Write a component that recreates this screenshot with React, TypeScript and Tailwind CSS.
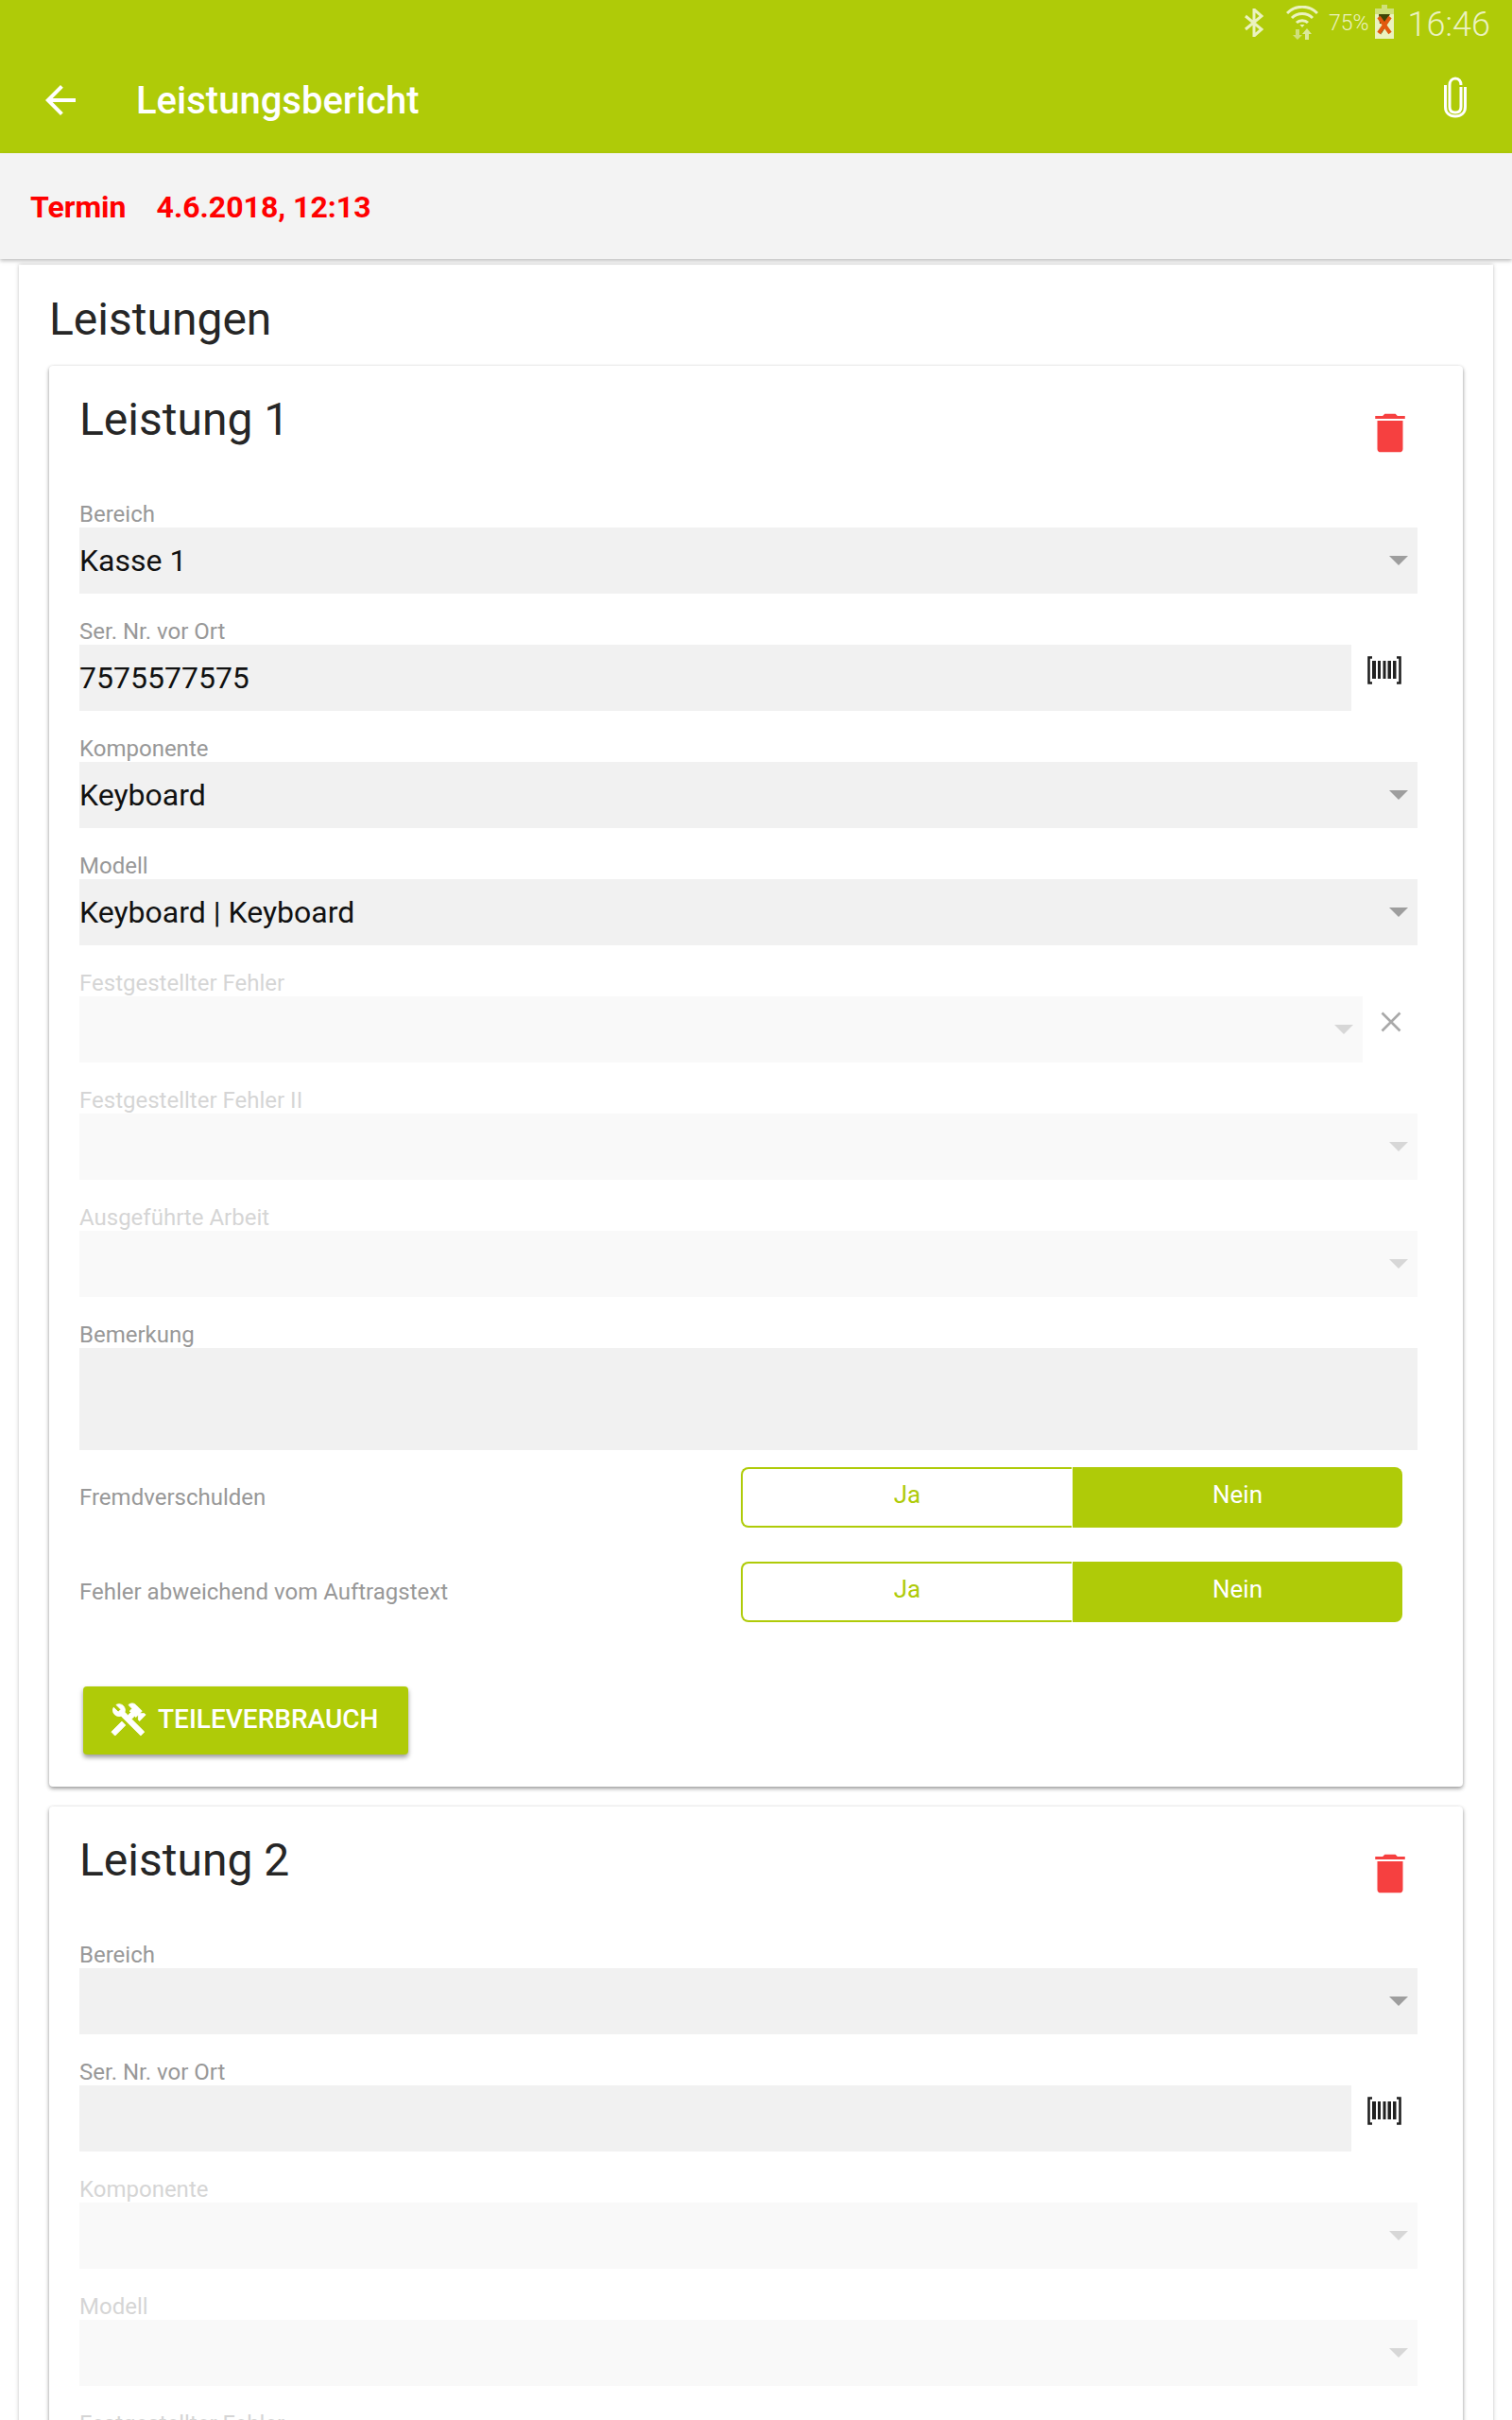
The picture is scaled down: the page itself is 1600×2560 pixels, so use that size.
const Arrow = () => (
  <svg width="20" height="10" viewBox="0 0 20 10" className="shrink-0">
    <polygon points="0,0 20,0 10,10" fill="#9e9e9e" />
  </svg>
);

const BackArrow = () => (
  <svg width="48" height="48" viewBox="0 0 24 24" className="mt-[-2px] shrink-0">
    <path d="M20 11H7.830l5.590-5.590L12 4l-8 8 8 8 1.410-1.410L7.830 13H20v-2z" fill="#ffffff" />
  </svg>
);

// mirrored, the wrench sits on the left in the picture
const HammerWrench = () => (
  <svg width="44" height="44" viewBox="0 0 24 24" className="shrink-0 -scale-x-100">
    <path
      d="M13.780 15.300L19.780 21.300L21.890 19.140L15.890 13.140L13.780 15.300M17.500 10.100C17.110 10.100 16.690 10.050 16.360 9.910L4.970 21.250L2.860 19.140L10.270 11.740L8.500 9.960L7.780 10.660L6.330 9.250V12.110L5.630 12.810L2.110 9.250L2.810 8.550H5.620L4.220 7.140L7.780 3.580C8.950 2.410 10.830 2.410 12 3.580L9.890 5.740L11.300 7.140L10.590 7.850L12.380 9.630L14.200 7.750C14.060 7.420 14 7 14 6.630C14 4.660 15.560 3.110 17.500 3.110C18.090 3.110 18.610 3.250 19.080 3.530L16.410 6.200L17.910 7.700L20.580 5.030C20.860 5.500 21 6 21 6.630C21 8.550 19.450 10.100 17.500 10.100Z"
      fill="#ffffff"
      stroke="#ffffff"
      strokeWidth="0.5"
    />
  </svg>
);

const Barcode = () => (
  <svg width="36" height="30" viewBox="0 0 36 30" className="shrink-0">
    <path d="M5 1.500H1.500V28.500H5M31 1.500H34.500V28.500H31" fill="none" stroke="#212121" strokeWidth="2.600" />
    <rect x="5" y="5" width="4" height="19" fill="#212121" />
    <rect x="11" y="5" width="3" height="19" fill="#212121" />
    <rect x="16.500" y="5" width="3" height="19" fill="#212121" />
    <rect x="21.500" y="5" width="3.500" height="19" fill="#212121" />
    <rect x="27" y="5" width="3.500" height="19" fill="#212121" />
  </svg>
);

const Trash = () => (
  <svg width="54" height="54" viewBox="0 0 24 24" className="shrink-0">
    <path
      d="M19 4h-3.500l-1-1h-5l-1 1H5v1.300h14V4zM6 19.500c0 .9.7 1.500 1.500 1.500h9c.8 0 1.500-.6 1.500-1.500V6.200H6v13.300z"
      fill="#f64040"
    />
  </svg>
);

const Field = ({
  label,
  value,
  disabled,
  children,
  trailing,
  h = "h-[70px]",
}: {
  label: string;
  value?: string;
  disabled?: boolean;
  children?: React.ReactNode;
  trailing?: React.ReactNode;
  h?: string;
}) => (
  <div className="pt-[28px]">
    <div className={`h-[26px] text-[24px] leading-[25px] text-[#989898] ${disabled ? "opacity-40" : ""}`}>{label}</div>
    <div className="flex items-start">
      <div className={`flex flex-1 items-center justify-between bg-[#f1f1f1] pr-[10px] ${h} ${disabled ? "opacity-40" : ""}`}>
        <span className="text-[32px] text-[#111111]">{value}</span>
        {children}
      </div>
      {trailing}
    </div>
  </div>
);

const Toggle = ({ label }: { label: string }) => (
  <div className="flex items-center justify-between pr-[16px]">
    <span className="text-[24px] text-[#989898]">{label}</span>
    <div className="flex h-[64px] w-[700px] text-[26px]">
      <div className="flex w-[350px] items-start justify-center rounded-l-[8px] border-2 border-r-0 border-[#afcb08] pt-[12px] leading-[30px] text-[#afcb08]">
        Ja
      </div>
      <div className="ml-[1px] flex flex-1 items-start justify-center rounded-r-[8px] bg-[#afcb08] pt-[14px] leading-[30px] text-white">
        Nein
      </div>
    </div>
  </div>
);

const Card = ({ n, children }: { n: number; children: React.ReactNode }) => (
  <div className="rounded-[4px] bg-white pr-[48px] pl-[32px] shadow-[0_2px_4px_rgba(0,0,0,0.4),0_0_3px_rgba(0,0,0,0.06)]">
    <div className="flex h-[117px] items-start justify-between">
      <h2 className="pt-[27px] text-[48px] leading-[60px] font-normal text-[#262626]">Leistung {n}</h2>
      <div className="mt-[44px] mr-[2px]">
        <Trash />
      </div>
    </div>
    {children}
  </div>
);

const Status = () => (
  <div className="flex h-[83px] items-start justify-end pr-[23px] text-[#ebf2c0]">
    <svg width="20" height="30" viewBox="0 0 20 30" className="mt-[9px]">
      <path d="M1 8L18 22L10 29V1L18 8L1 22" fill="none" stroke="#ebf2c0" strokeWidth="3" />
    </svg>
    <svg width="34" height="36" viewBox="0 0 34 36" className="mt-[6px] ml-[24px]">
      <path d="M1 8C10 -1 24 -1 33 8" fill="none" stroke="#ebf2c0" strokeWidth="3" />
      <path d="M6 13C12 7 22 7 28 13" fill="none" stroke="#ebf2c0" strokeWidth="3" />
      <path d="M11 18C14 15 20 15 23 18" fill="none" stroke="#ebf2c0" strokeWidth="3" />
      <path d="M14.500 20H19.500L17 23Z" fill="#ebf2c0" />
      <path d="M14 25V31H17L12 36L7 31H10V25Z" fill="#cfe07a" />
      <path d="M20 36V30H17L22 24L27 30H24V36Z" fill="#dbe89a" />
    </svg>
    <span className="mt-[11px] ml-[11px] text-[23px] leading-[28px] font-light">75%</span>
    <svg width="20" height="36" viewBox="0 0 20 36" className="mt-[5px] ml-[6px]">
      <rect x="7" y="0" width="6" height="4" fill="#cfe07a" />
      <rect x="0" y="4" width="20" height="32" fill="#ebf2c0" />
      <rect x="0" y="4" width="20" height="6" fill="#cfe07a" />
      <path d="M4 10H16L12 17H15L6 32L9 20H5Z" fill="#3f4707" />
      <path d="M4 13L16 30M16 13L4 30" stroke="#e2590f" strokeWidth="4" />
    </svg>
    <span className="mt-[4px] ml-[15px] text-[36px] leading-[44px] font-light">16:46</span>
  </div>
);

const ClearX = () => (
  <div className="w-[58px] shrink-0 pt-[16px] pl-[19px]">
    <svg width="22" height="22" viewBox="0 0 22 22">
      <path d="M1.500 1.500L20.500 20.500M20.500 1.500L1.500 20.500" stroke="#a9a9a9" strokeWidth="2.600" />
    </svg>
  </div>
);

const BarcodeSlot = () => (
  <div className="mt-[12px] ml-[17px] mr-[17px] shrink-0">
    <Barcode />
  </div>
);

export default function App() {
  return (
    <div className="h-[2560px] overflow-hidden bg-white font-['Roboto',sans-serif]">
      <header className="h-[162px] bg-[#afcb08]">
        <Status />
        <div className="flex items-center justify-between pr-[48px] pl-[40px]">
          <div className="flex items-center">
            <BackArrow />
            <span className="ml-[56px] text-[40px] leading-[48px] font-medium text-white">Leistungsbericht</span>
          </div>
          <svg width="24" height="44" viewBox="0 0 24 44" className="mt-[-8px]">
            <path
              d="M18 11V32C18 36 15.500 38 12 38C8.500 38 6 36 6 32V9C6 5 8.500 2 12 2C16 2 18 5 18 9M22.500 11V32C22.500 38.500 18 42 12 42C6 42 1.500 38.500 1.500 32V9"
              fill="none"
              stroke="#ffffff"
              strokeWidth="3"
            />
          </svg>
        </div>
      </header>

      <div className="relative z-10 flex h-[112px] items-center gap-[32px] bg-[#f3f3f3] pt-[2px] pl-[32px] text-[32px] font-bold text-[#ff0000] shadow-[0_2px_4px_rgba(0,0,0,0.25)]">
        <span>Termin</span>
        <span>4.6.2018, 12:13</span>
      </div>

      <div className="mx-[20px] mt-[6px] bg-white px-[32px] shadow-[0_0_4px_rgba(0,0,0,0.25)]">
        <h1 className="pt-[30px] pb-[21px] text-[48px] leading-[56px] font-normal text-[#262626]">Leistungen</h1>

        <div className="flex flex-col gap-[21px]">
          <Card n={1}>
            <div>
              <Field label="Bereich" value="Kasse 1">
                <Arrow />
              </Field>
              <Field label="Ser. Nr. vor Ort" value="7575577575" trailing={<BarcodeSlot />}></Field>
              <Field label="Komponente" value="Keyboard">
                <Arrow />
              </Field>
              <Field label="Modell" value="Keyboard | Keyboard">
                <Arrow />
              </Field>
              <Field label="Festgestellter Fehler" disabled trailing={<ClearX />}>
                <Arrow />
              </Field>
              <Field label="Festgestellter Fehler II" disabled>
                <Arrow />
              </Field>
              <Field label="Ausgeführte Arbeit" disabled>
                <Arrow />
              </Field>
              <Field label="Bemerkung" h="h-[108px]"></Field>
            </div>
            <div className="mt-[18px] flex flex-col gap-[36px]">
              <Toggle label="Fremdverschulden" />
              <Toggle label="Fehler abweichend vom Auftragstext" />
            </div>
            <div className="pt-[68px] pb-[34px] pl-[4px]">
              <button className="flex h-[72px] w-[344px] items-center rounded-[4px] bg-[#afcb08] pb-[2px] pl-[26px] text-[28px] font-medium text-white shadow-[0_3px_5px_rgba(0,0,0,0.4)]">
                <HammerWrench />
                <span className="ml-[9px]">TEILEVERBRAUCH</span>
              </button>
            </div>
          </Card>

          <Card n={2}>
            <div>
              <Field label="Bereich">
                <Arrow />
              </Field>
              <Field label="Ser. Nr. vor Ort" trailing={<BarcodeSlot />}></Field>
              <Field label="Komponente" disabled>
                <Arrow />
              </Field>
              <Field label="Modell" disabled>
                <Arrow />
              </Field>
              <Field label="Festgestellter Fehler" disabled trailing={<ClearX />}>
                <Arrow />
              </Field>
            </div>
          </Card>
        </div>
      </div>
    </div>
  );
}
